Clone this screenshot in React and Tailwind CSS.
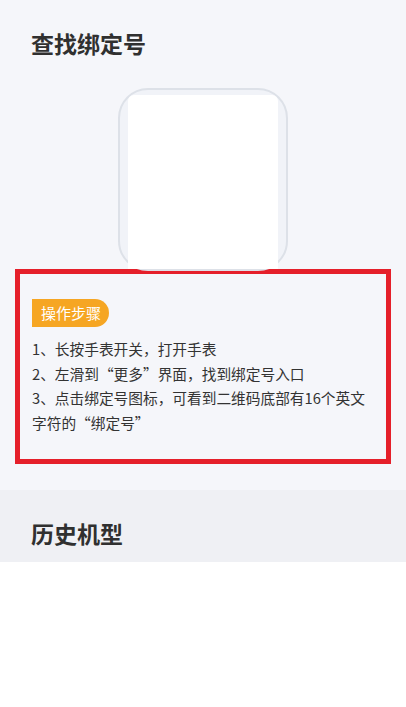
export default function App() {
  const steps = [
    '1、长按手表开关，打开手表',
    '2、左滑到“更多”界面，找到绑定号入口',
    '3、点击绑定号图标，可看到二维码底部有16个英文字符的“绑定号”',
  ]

  return (
    <div
      className="min-h-[707px] bg-white"
      style={{ fontFamily: '"Noto Sans CJK SC", "Noto Sans", sans-serif' }}
    >
      {/* Find binding number */}
      <div className="bg-[#f5f6fa] pt-[28px] pb-[26px]">
        <h1 className="pl-[31px] text-[23px] leading-[30px] font-bold text-[#303030]">查找绑定号</h1>

        <div className="mt-[30px] flex justify-center">
          <div className="h-[183px] w-[170px] rounded-[30px] border-2 border-[#dde1e8] bg-[#f1f3f8] px-[8px] pt-[5px]">
            <div className="h-full rounded-t-[6px] bg-white"></div>
          </div>
        </div>

        <div className="-mt-[2px] mx-[15px] border-[5px] border-[#e51f2a] pt-[25px] pb-[24px] pl-[12px] pr-[14px]">
          <span className="inline-flex h-[28px] items-center rounded-l-[3px] rounded-r-full bg-[#f6a623] pl-[9px] pr-[8px] text-[15px] text-white">
            操作步骤
          </span>
          <div className="mt-[10px] text-[14.7px] leading-[24.5px] text-[#333]">
            {steps.map(step => (
              <p key={step}>{step}</p>
            ))}
          </div>
        </div>
      </div>

      {/* History models */}
      <div className="bg-[#eff0f4] pt-[26px] pb-[12px]">
        <h2 className="pl-[31px] text-[23px] leading-[34px] font-bold text-[#303030]">历史机型</h2>
      </div>
    </div>
  )
}
